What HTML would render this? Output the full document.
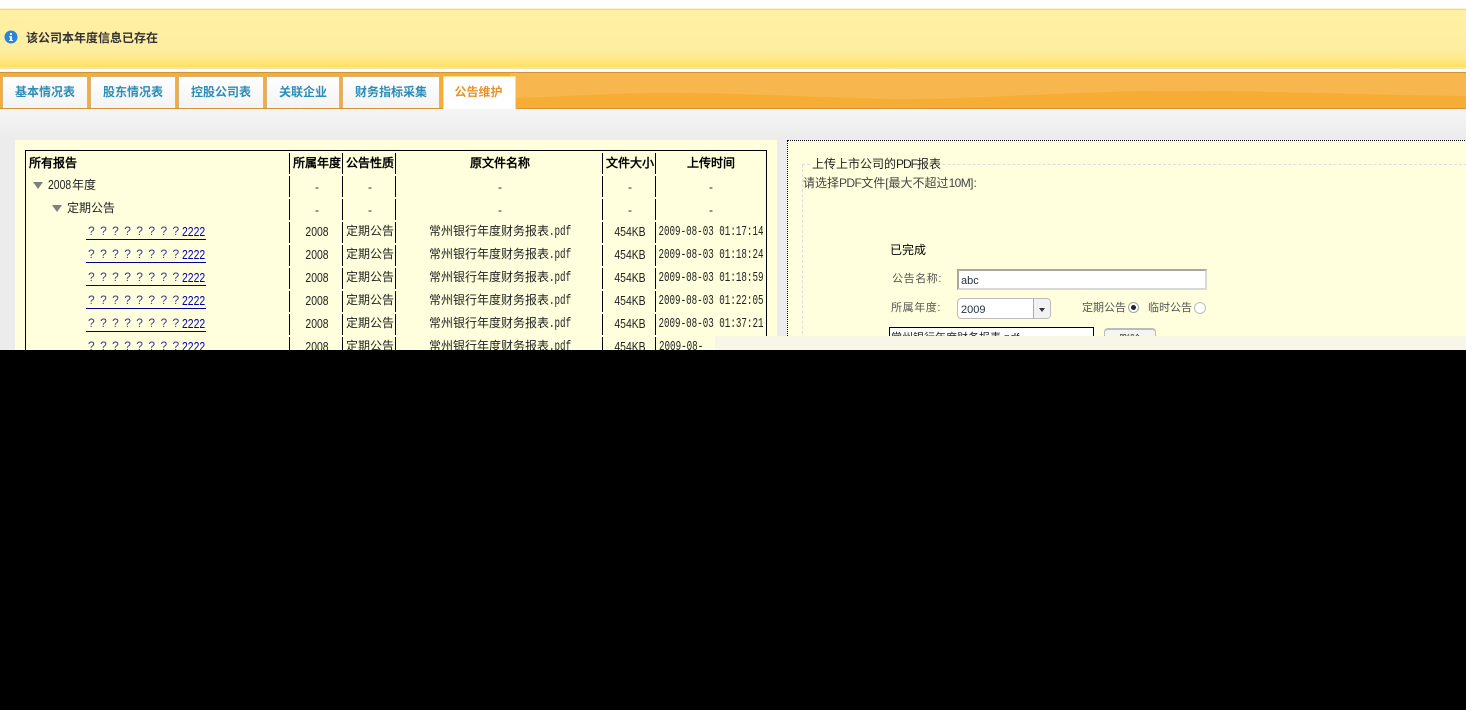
<!DOCTYPE html>
<html lang="zh-CN">
<head>
<meta charset="utf-8">
<title>公告维护</title>
<style>
html,body{margin:0;padding:0;width:1466px;height:710px;overflow:hidden;background:#fff}
body{position:relative;font:12px/16px "WenQuanYi Zen Hei","Liberation Sans",sans-serif;color:#222}
div,a,span{position:absolute;white-space:nowrap}
i{font-style:normal}
.tab{top:76px;height:32px;background:linear-gradient(#fff,#f3f3f3);border:1px solid #d8b47c;border-bottom:0;box-sizing:border-box;color:#2b8db8;font-weight:bold;text-align:center;line-height:30px;font-family:"Noto Sans CJK SC",sans-serif;font-size:12px}
.c{text-align:center}
.h{font-weight:bold;color:#000;top:155px}
.v{width:1px;background:#000;height:21px}
.tri{width:0;height:0;border-left:5px solid transparent;border-right:5px solid transparent;border-top:7px solid #808080}
.n{font:13px/16px "Liberation Sans",sans-serif;text-align:center;transform:scaleX(.8);color:#222}
.d{font:14px/16px "Liberation Mono",monospace;text-align:center;transform:scaleX(.658);color:#222;left:631px;width:160px}
.p{font:14px/16px "Liberation Mono",monospace;transform:scaleX(.658);transform-origin:left center;color:#222}
a{color:#0000c8;text-decoration:none;border-bottom:1px solid #00008c;height:15px;width:120px;left:86px}
.q{left:2px;top:0;font:12px/15px "Liberation Sans",sans-serif;letter-spacing:5.4px;color:#3a3a9a}
.t{left:96px;top:0;font:13px/15px "Liberation Sans",sans-serif;transform:scaleX(.8);transform-origin:left center;color:#0000b8}
.lbl{color:#555;font-size:11px}
.lat{letter-spacing:-.6px}
</style>
</head>
<body>
<!-- message bar -->
<div style="left:0;top:8px;width:1466px;height:1px;background:#fdf6cc"></div>
<div style="left:0;top:9px;width:1466px;height:60px;box-sizing:border-box;border-top:1px solid #e8d98a;border-bottom:2px solid #efe6ae;background:linear-gradient(#fff0a4 0,#feeea2 70%,#ffe98a 85%,#ffe060 100%)"></div>
<svg style="position:absolute;left:4px;top:30px" width="14" height="14" viewBox="0 0 14 14"><circle cx="7" cy="7" r="6.500" fill="#2a86dc"/><rect x="6" y="3" width="2" height="2" fill="#fff"/><path d="M5 6.200H8V10H9V11H5V10H6V7.200H5Z" fill="#fff"/></svg>
<div style="left:26px;top:30px;font:bold 12px/16px 'Noto Sans CJK SC',sans-serif;color:#333">该公司本年度信息已存在</div>

<!-- tab bar -->
<div style="left:0;top:72px;width:1466px;height:37px;box-sizing:border-box;border-top:1px solid #d69238;border-bottom:1px solid #d69238;background:#f6ad36;overflow:hidden">
<svg style="position:absolute;left:0;top:0" width="1466" height="35" viewBox="0 0 1466 35"><path d="M510 25.500C570 23 620 20 670 20C750 20 820 25 900 26C980 26 1060 19 1150 18C1260 17 1360 22 1466 23V0H510Z" fill="#f8b64e"/></svg>
</div>
<div class="tab" style="left:2px;width:86px">基本情况表</div>
<div class="tab" style="left:90px;width:86px">股东情况表</div>
<div class="tab" style="left:178px;width:86px">控股公司表</div>
<div class="tab" style="left:266px;width:74px">关联企业</div>
<div class="tab" style="left:342px;width:98px">财务指标采集</div>
<div class="tab" style="left:443px;width:73px;height:33px;background:#fff;border-color:#fbe08c;color:#e8922a;padding-right:2px">公告维护</div>

<!-- main grey -->
<div style="left:0;top:109px;width:1466px;height:241px;background:linear-gradient(#f5f5f5,#ececec 30px,#ececec)"></div>

<!-- left panel -->
<div style="left:15px;top:140px;width:762px;height:210px;background:#ffffdd"></div>
<div style="left:25px;top:150px;width:742px;height:200px;box-sizing:border-box;border:1px solid #000;border-bottom:0"></div>

<div id="t" style="left:0;top:0;width:780px;height:350px;overflow:hidden;color:#222">
<div class="h" style="left:29px">所有报告</div>
<div class="h c" style="left:291px;width:52px">所属年度</div>
<div class="h c" style="left:344px;width:52px">公告性质</div>
<div class="h c" style="left:397px;width:206px">原文件名称</div>
<div class="h c" style="left:604px;width:52px">文件大小</div>
<div class="h c" style="left:656px;width:110px">上传时间</div>

<div class="v" style="left:289px;top:153px"></div><div class="v" style="left:342px;top:153px"></div><div class="v" style="left:395px;top:153px"></div><div class="v" style="left:602px;top:153px"></div><div class="v" style="left:655px;top:153px"></div>
<div class="v" style="left:289px;top:176px"></div><div class="v" style="left:342px;top:176px"></div><div class="v" style="left:395px;top:176px"></div><div class="v" style="left:602px;top:176px"></div><div class="v" style="left:655px;top:176px"></div>
<div class="v" style="left:289px;top:199px"></div><div class="v" style="left:342px;top:199px"></div><div class="v" style="left:395px;top:199px"></div><div class="v" style="left:602px;top:199px"></div><div class="v" style="left:655px;top:199px"></div>
<div class="v" style="left:289px;top:222px"></div><div class="v" style="left:342px;top:222px"></div><div class="v" style="left:395px;top:222px"></div><div class="v" style="left:602px;top:222px"></div><div class="v" style="left:655px;top:222px"></div>
<div class="v" style="left:289px;top:245px"></div><div class="v" style="left:342px;top:245px"></div><div class="v" style="left:395px;top:245px"></div><div class="v" style="left:602px;top:245px"></div><div class="v" style="left:655px;top:245px"></div>
<div class="v" style="left:289px;top:268px"></div><div class="v" style="left:342px;top:268px"></div><div class="v" style="left:395px;top:268px"></div><div class="v" style="left:602px;top:268px"></div><div class="v" style="left:655px;top:268px"></div>
<div class="v" style="left:289px;top:291px"></div><div class="v" style="left:342px;top:291px"></div><div class="v" style="left:395px;top:291px"></div><div class="v" style="left:602px;top:291px"></div><div class="v" style="left:655px;top:291px"></div>
<div class="v" style="left:289px;top:314px"></div><div class="v" style="left:342px;top:314px"></div><div class="v" style="left:395px;top:314px"></div><div class="v" style="left:602px;top:314px"></div><div class="v" style="left:655px;top:314px"></div>
<div class="v" style="left:289px;top:337px"></div><div class="v" style="left:342px;top:337px"></div><div class="v" style="left:395px;top:337px"></div><div class="v" style="left:602px;top:337px"></div><div class="v" style="left:655px;top:337px"></div>

<div class="tri" style="left:33px;top:182px"></div><div class="n" style="left:48px;top:177px;width:24px;text-align:left;transform-origin:left center">2008</div><div style="left:72px;top:177px">年度</div>
<div class="c" style="left:291px;top:179px;width:52px">-</div><div class="c" style="left:344px;top:179px;width:52px">-</div><div class="c" style="left:397px;top:179px;width:206px">-</div><div class="c" style="left:604px;top:179px;width:52px">-</div><div class="c" style="left:656px;top:179px;width:110px">-</div>
<div class="tri" style="left:52px;top:205px"></div><div style="left:67px;top:200px">定期公告</div>
<div class="c" style="left:291px;top:202px;width:52px">-</div><div class="c" style="left:344px;top:202px;width:52px">-</div><div class="c" style="left:397px;top:202px;width:206px">-</div><div class="c" style="left:604px;top:202px;width:52px">-</div><div class="c" style="left:656px;top:202px;width:110px">-</div>

<a style="top:224px"><span class="q">????????</span><span class="t">2222</span></a>
<div class="n" style="left:291px;top:224px;width:52px">2008</div><div class="c" style="left:344px;top:223px;width:52px">定期公告</div><div style="left:429px;top:223px">常州银行年度财务报表</div><div class="p" style="left:549px;top:224px">.pdf</div><div class="n" style="left:604px;top:224px;width:52px">454KB</div><div class="d" style="top:224px">2009-08-03 01:17:14</div>

<a style="top:247px"><span class="q">????????</span><span class="t">2222</span></a>
<div class="n" style="left:291px;top:247px;width:52px">2008</div><div class="c" style="left:344px;top:246px;width:52px">定期公告</div><div style="left:429px;top:246px">常州银行年度财务报表</div><div class="p" style="left:549px;top:247px">.pdf</div><div class="n" style="left:604px;top:247px;width:52px">454KB</div><div class="d" style="top:247px">2009-08-03 01:18:24</div>

<a style="top:270px"><span class="q">????????</span><span class="t">2222</span></a>
<div class="n" style="left:291px;top:270px;width:52px">2008</div><div class="c" style="left:344px;top:269px;width:52px">定期公告</div><div style="left:429px;top:269px">常州银行年度财务报表</div><div class="p" style="left:549px;top:270px">.pdf</div><div class="n" style="left:604px;top:270px;width:52px">454KB</div><div class="d" style="top:270px">2009-08-03 01:18:59</div>

<a style="top:293px"><span class="q">????????</span><span class="t">2222</span></a>
<div class="n" style="left:291px;top:293px;width:52px">2008</div><div class="c" style="left:344px;top:292px;width:52px">定期公告</div><div style="left:429px;top:292px">常州银行年度财务报表</div><div class="p" style="left:549px;top:293px">.pdf</div><div class="n" style="left:604px;top:293px;width:52px">454KB</div><div class="d" style="top:293px">2009-08-03 01:22:05</div>

<a style="top:316px"><span class="q">????????</span><span class="t">2222</span></a>
<div class="n" style="left:291px;top:316px;width:52px">2008</div><div class="c" style="left:344px;top:315px;width:52px">定期公告</div><div style="left:429px;top:315px">常州银行年度财务报表</div><div class="p" style="left:549px;top:316px">.pdf</div><div class="n" style="left:604px;top:316px;width:52px">454KB</div><div class="d" style="top:316px">2009-08-03 01:37:21</div>

<a style="top:339px"><span class="q">????????</span><span class="t">2222</span></a>
<div class="n" style="left:291px;top:339px;width:52px">2008</div><div class="c" style="left:344px;top:338px;width:52px">定期公告</div><div style="left:429px;top:338px">常州银行年度财务报表</div><div class="p" style="left:549px;top:339px">.pdf</div><div class="n" style="left:604px;top:339px;width:52px">454KB</div><div class="p" style="left:659px;top:339px">2009-08-</div>
</div>

<!-- right panel -->
<div style="left:787px;top:140px;width:690px;height:210px;box-sizing:border-box;border:1px dotted #000;background:#ffffdd"></div>
<div style="left:802px;top:164px;width:680px;height:190px;box-sizing:border-box;border:1px dashed #ddd"></div>
<div style="left:811px;top:156px;background:#ffffdd;padding:0 1px;color:#222">上传上市公司的<i style="letter-spacing:-1px">PDF</i>报表</div>
<div style="left:803px;top:175px;color:#444">请选择<i class="lat">PDF</i>文件[最大不超过<i class="lat">10M</i>]:</div>
<div style="left:890px;top:242px;color:#000">已完成</div>
<div class="lbl" style="left:892px;top:271px;letter-spacing:.6px">公告名称:</div>
<div style="left:957px;top:269px;width:250px;height:21px;box-sizing:border-box;background:#fff;border:2px solid #d8d8d8;border-top-color:#a8a8a0;border-left-color:#a8a8a0;font:11px/20px 'Liberation Sans',sans-serif;color:#234;padding-left:2px">abc</div>
<div class="lbl" style="left:891px;top:300px;letter-spacing:.6px">所属年度:</div>
<div style="left:957px;top:298px;width:94px;height:21px;box-sizing:border-box;background:#fff;border:1px solid #bbb;border-radius:4px;font:11px/22px 'Liberation Sans',sans-serif;color:#234;padding-left:3px;overflow:hidden">2009
<div style="right:0;top:0;width:16px;height:21px;background:#f2f2f2;border-left:1px solid #aaa"></div>
<div style="right:5px;top:9px;width:0;height:0;border-left:3px solid transparent;border-right:3px solid transparent;border-top:4px solid #334"></div>
</div>
<div class="lbl" style="left:1082px;top:300px">定期公告</div>
<div style="left:1128px;top:302px;width:9px;height:9px;border:1px solid #9a9;border-radius:50%;background:#fff"></div>
<div style="left:1131px;top:305px;width:5px;height:5px;border-radius:50%;background:#223"></div>
<div class="lbl" style="left:1148px;top:300px">临时公告</div>
<div style="left:1194px;top:302px;width:10px;height:10px;border:1px solid #bbb;border-radius:50%;background:#fff"></div>
<div style="left:889px;top:327px;width:205px;height:26px;box-sizing:border-box;border:1px solid #000;background:#fff;padding:3px 0 0 1px;font-size:11px;line-height:14px;color:#222;overflow:hidden">常州银行年度财务报表.pdf</div>
<div class="c" style="left:1104px;top:328px;width:52px;height:24px;box-sizing:border-box;border:1px solid #bbb;border-top:2px solid #bbb;border-radius:4px;background:#f4f4f4;font-size:11px;color:#444;line-height:14px;padding-top:3px">删除</div>

<!-- overlays -->
<div style="left:715px;top:336px;width:751px;height:14px;background:#f8f6e6"></div>
<div style="left:0;top:350px;width:1466px;height:360px;background:#000"></div>
</body>
</html>
